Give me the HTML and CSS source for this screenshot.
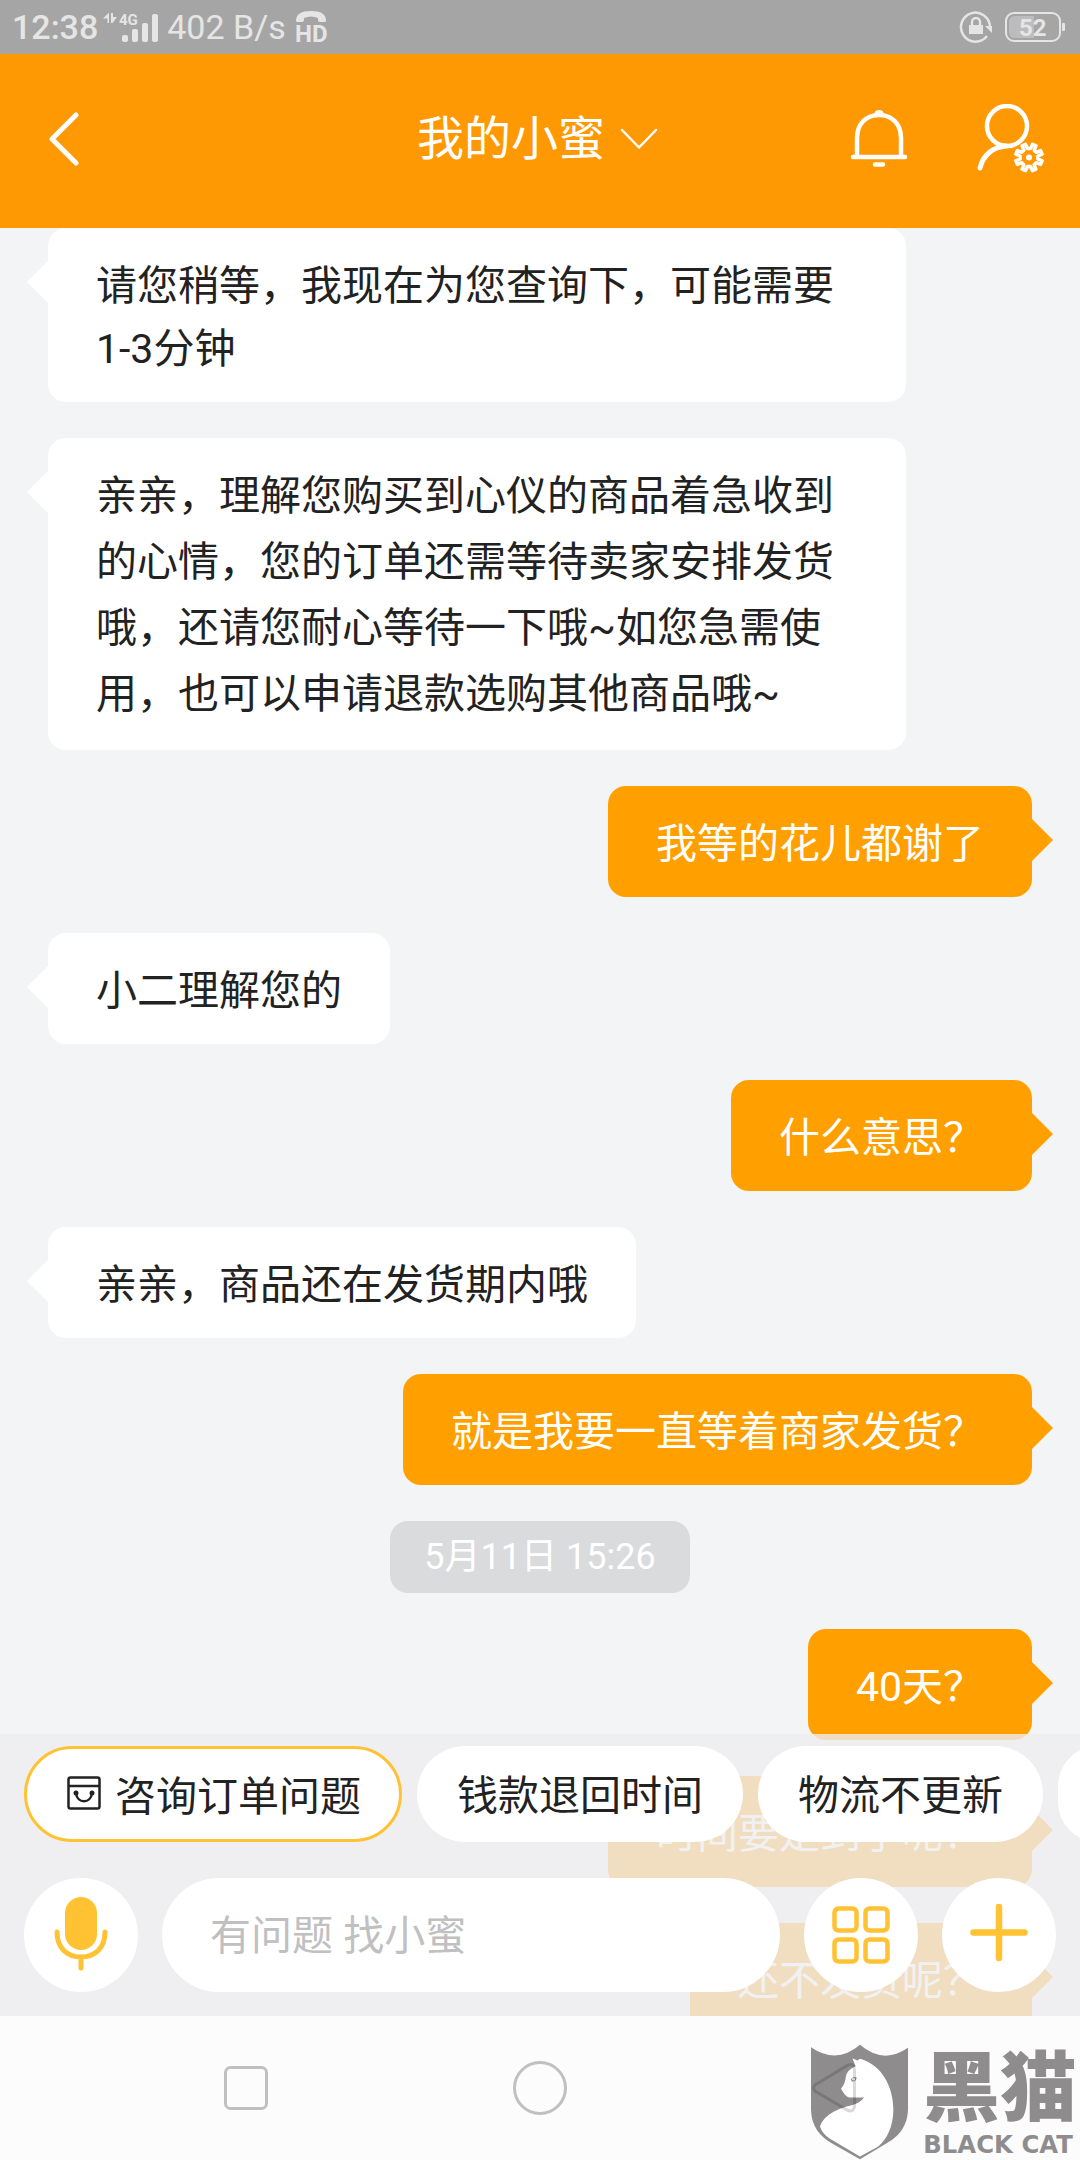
FILE: index.html
```html
<!DOCTYPE html>
<html lang="zh-CN">
<head>
    <meta charset="UTF-8">
    <meta name="viewport" content="width=device-width, initial-scale=1.0">
    <title>我的小蜜</title>
    <link rel="stylesheet" href="styles.css">
</head>
<body>

<div class="status-bar">
    <span class="clock">12:38</span>
    <svg class="signal" width="57" height="32" viewBox="102 10 57 32">
        <path d="M103 17.500L109 11.500V22H107.500V17.500ZM111 12H113V16H117L112.500 22H111Z"/>
        <text x="119" y="24" font-size="15">4G</text>
        <rect x="122" y="34" width="6" height="7" rx="2"/>
        <rect x="132" y="28" width="6" height="13" rx="2"/>
        <rect x="142" y="22" width="6" height="19" rx="2"/>
        <rect x="152" y="13" width="6" height="28" rx="2"/>
    </svg>
    <span class="speed">402 B/s</span>
    <svg class="hd" width="36" height="34" viewBox="293 10 36 34">
        <path d="M295 21C295 14 300 11 310 11S325 14 325 21Q325 22 323 22H319Q317 22 317 20V18Q310 15 303 18V20Q303 22 301 22H297Q295 22 295 21Z"/>
        <text x="294" y="42" font-size="24">HD</text>
    </svg>
    <svg class="lock" width="34" height="34" viewBox="959 10 34 34">
        <path d="M990 27A14.500 14.500 0 1 0 987 36" fill="none" stroke="#e5e5e5" stroke-width="2.500"/>
        <path d="M985 26H992V33Z"/>
        <rect x="969" y="25" width="14" height="9"/>
        <path d="M972 26V22a4 4 0 0 1 8 0V26" fill="none" stroke="#e5e5e5" stroke-width="2.500"/>
    </svg>
    <svg class="battery" width="61" height="32" viewBox="1005 11 61 32">
        <path d="M1034 16H1015Q1009 16 1009 22V32Q1009 38 1015 38H1034Z" fill="#bcbcbc"/>
        <rect x="1006" y="13" width="54" height="28" rx="8" fill="none" stroke="#e5e5e5" stroke-width="2"/>
        <rect x="1062" y="23" width="3" height="8" rx="1"/>
        <text x="1019" y="36" font-size="24">52</text>
    </svg>
</div>

<header class="header">
    <button class="icon-button back" aria-label="返回">
        <svg width="30" height="54" viewBox="0 0 30 54">
            <path d="M27 3L3 27L27 51" fill="none" stroke="#fff" stroke-width="5" stroke-linecap="round" stroke-linejoin="round"/>
        </svg>
    </button>
    <button class="title">
        我的小蜜
        <svg width="44" height="22" viewBox="0 0 44 22">
            <path d="M3 2L20 19.500L37 2" fill="none" stroke="#fff" stroke-width="2.500" stroke-linecap="round" stroke-linejoin="round"/>
        </svg>
    </button>
    <div class="header-actions">
        <button class="icon-button" aria-label="通知">
            <svg width="58" height="60" viewBox="0 0 58 60">
                <g fill="none" stroke="#fff" stroke-width="4.500" stroke-linecap="round">
                    <path d="M7 47V29C7 14 17 6 29 6S51 14 51 29V47"/>
                    <path d="M3 48H55"/>
                    <path d="M25 55.500H33"/>
                </g>
                <ellipse cx="29" cy="4.500" rx="4.500" ry="3.500" fill="#fff"/>
            </svg>
        </button>
        <button class="icon-button" aria-label="个人设置">
            <svg width="70" height="70" viewBox="0 0 70 70">
                <g fill="none" stroke="#fff" stroke-linecap="round">
                    <circle cx="30" cy="22" r="20" stroke-width="4.500"/>
                    <path d="M3 64C6 51 16 43 29 42" stroke-width="5"/>
                    <path transform="translate(52 53.500)" d="M8.900 1.500L13.100 3.400L11.600 6.900L7.300 5.200L5.200 7.300L6.900 11.600L3.400 13.100L1.500 8.900H-1.500L-3.400 13.100L-6.900 11.600L-5.200 7.300L-7.300 5.200L-11.600 6.900L-13.100 3.400L-8.900 1.500V-1.500L-13.100 -3.400L-11.600 -6.900L-7.300 -5.200L-5.200 -7.300L-6.900 -11.600L-3.400 -13.100L-1.500 -8.900H1.500L3.400 -13.100L6.900 -11.600L5.200 -7.300L7.300 -5.200L11.600 -6.900L13.100 -3.400L8.900 -1.500Z" stroke-width="3.500" stroke-linejoin="round"/>
                </g>
                <circle cx="52" cy="53.500" r="3" fill="#fff"/>
            </svg>
        </button>
    </div>
</header>

<main class="chat">
    <div class="messages">
        <div class="bubble">请您稍等，我现在为您查询下，可能需要1-3分钟</div>
        <div class="bubble long">亲亲，理解您购买到心仪的商品着急收到的心情，您的订单还需等待卖家安排发货哦，还请您耐心等待一下哦~如您急需使用，也可以申请退款选购其他商品哦~</div>
        <div class="bubble mine">我等的花儿都谢了</div>
        <div class="bubble">小二理解您的</div>
        <div class="bubble mine">什么意思？</div>
        <div class="bubble">亲亲，商品还在发货期内哦</div>
        <div class="bubble mine">就是我要一直等着商家发货？</div>
        <time class="timestamp">5月11日 15:26</time>
        <div class="bubble mine">40天？</div>
        <div class="bubble mine">时间要是到了呢？</div>
        <div class="bubble mine">还不发货呢？</div>
    </div>

    <div class="composer">
        <div class="chips">
            <button class="chip active">
                <svg width="34" height="34" viewBox="0 0 34 34">
                    <g fill="none" stroke="#222" stroke-width="2.500">
                        <rect x="1.500" y="1.500" width="31" height="31" rx="2"/>
                        <path d="M1.500 10H32.500"/>
                        <path d="M9 17C10 28 24 28 25 17"/>
                    </g>
                    <circle cx="9" cy="17" r="2.500" fill="#222"/>
                    <circle cx="25" cy="17" r="2.500" fill="#222"/>
                </svg>
                咨询订单问题
            </button>
            <button class="chip">钱款退回时间</button>
            <button class="chip">物流不更新</button>
            <button class="chip" aria-label="更多"></button>
        </div>
        <div class="input-row">
            <button class="round-button" aria-label="语音">
                <svg width="54" height="76" viewBox="0 0 54 76">
                    <rect x="11" y="0" width="32" height="53" rx="16" fill="#ffc233"/>
                    <path d="M3 35C3 51 13 60 27 60S51 51 51 35M27 60V71" fill="none" stroke="#ffc233" stroke-width="5" stroke-linecap="round"/>
                </svg>
            </button>
            <input class="message-input" type="text" placeholder="有问题 找小蜜" aria-label="输入消息">
            <button class="round-button" aria-label="功能">
                <svg width="58" height="58" viewBox="0 0 58 58">
                    <g fill="none" stroke="#ffc233" stroke-width="4.500">
                        <rect x="2.500" y="2.500" width="22" height="22" rx="4"/>
                        <rect x="33.500" y="2.500" width="22" height="22" rx="4"/>
                        <rect x="2.500" y="33.500" width="22" height="22" rx="4"/>
                        <rect x="33.500" y="33.500" width="22" height="22" rx="4"/>
                    </g>
                </svg>
            </button>
            <button class="round-button" aria-label="添加">
                <svg width="58" height="62" viewBox="0 0 58 62">
                    <path d="M3.500 28.500H54.500M29 3V54" fill="none" stroke="#ffc233" stroke-width="6.500" stroke-linecap="round"/>
                </svg>
            </button>
        </div>
    </div>
</main>

<nav class="nav-bar">
    <button class="nav-button" aria-label="最近任务">
        <svg width="44" height="44" viewBox="0 0 44 44">
            <rect x="1.500" y="1.500" width="41" height="41" rx="5" fill="none" stroke="#c0c0c0" stroke-width="3"/>
        </svg>
    </button>
    <button class="nav-button" aria-label="主屏幕">
        <svg width="54" height="54" viewBox="0 0 54 54">
            <circle cx="27" cy="27" r="25.500" fill="none" stroke="#c0c0c0" stroke-width="3"/>
        </svg>
    </button>
    <button class="nav-button" aria-label="返回上一页">
        <svg width="46" height="52" viewBox="0 0 46 52">
            <path d="M37 3L4 23Q1 26 4 29L36 48Q43 51 43.500 44V8Q43 1 37 3Z" fill="none" stroke="#000" stroke-opacity="0.150" stroke-width="3"/>
        </svg>
    </button>
    <svg class="watermark" width="270" height="117" viewBox="150 130 810 350">
        <path d="M153 142Q230 195 300 135Q370 195 444 144V330C442 385 410 415 380 430L300 478L215 430C180 410 154 380 153 330Z" fill="#8f8c8d"/>
        <path d="M277 175L292 182L300 177C365 195 400 260 400 330C400 380 380 420 355 440L300 470L220 423C195 408 185 395 180 380C195 340 240 325 280 315Q300 309 312 293H268C255 290 248 275 243 266C252 258 256 245 258 228C262 212 275 205 287 199Z" fill="#fff"/>
        <path d="M272 239Q279 229 290 233Q289 244 277 246Z" fill="#8f8c8d"/>
        <circle cx="281" cy="238" r="4" fill="#fff"/>
        <text class="brand" x="490" y="346" font-size="230">黑猫</text>
        <text class="brand-en" x="490" y="459" font-size="73">BLACK CAT</text>
    </svg>
</nav>

</body>
</html>
```

FILE: styles.css
```css
* {
    box-sizing: border-box;
}
body {
    display: flex;
    flex-direction: column;
    height: 100vh;
    margin: 0;
    background-color: #f3f4f6;
    color: #222;
    font-family: Roboto, "Noto Sans CJK SC", sans-serif;
    font-size: 41px;
    overflow: hidden;
}
button, input {
    padding: 0;
    border: none;
    background: none;
    color: inherit;
    font: inherit;
}
button {
    cursor: pointer;
}
svg {
    display: block;
    flex: none;
}

/* status bar */
.status-bar {
    display: flex;
    align-items: center;
    flex: none;
    height: 54px;
    padding: 0 14px 0 12px;
    background-color: #a5a5a5;
    color: #e5e5e5;
    fill: #e5e5e5;
    line-height: 54px;
}
.status-bar text {
    font-weight: 700;
}
.clock {
    font-size: 34px;
    font-weight: 500;
}
.signal {
    margin: 0 8px 0 4px;
}
.speed {
    font-size: 34px;
}
.hd {
    margin-left: 8px;
}
.lock {
    margin-left: auto;
}
.battery {
    margin-left: 12px;
}

/* header */
.header {
    display: grid;
    grid-template-columns: 1fr auto 1fr;
    align-items: center;
    flex: none;
    height: 174px;
    padding: 0 33px 4px;
    background-color: #ff9903;
    color: #fff;
}
.back {
    justify-self: start;
    padding-left: 16px;
}
.title {
    display: flex;
    align-items: center;
    gap: 14px;
    font-size: 47px;
    line-height: 64px;
}
.header-actions {
    display: flex;
    align-items: center;
    justify-content: flex-end;
    gap: 69px;
}

/* messages */
.chat {
    position: relative;
    flex: 1;
    min-height: 0;
}
.messages {
    display: flex;
    flex-direction: column;
    align-items: flex-start;
    gap: 36px;
    height: 100%;
    padding: 0 48px;
    overflow: hidden;
}
.bubble {
    position: relative;
    flex: none;
    max-width: 858px;
    padding: 27px 48px 21px;
    border-radius: 18px;
    background-color: #fff;
    line-height: 63px;
}
.bubble.long {
    padding: 25px 48px 23px;
    line-height: 66px;
}
.bubble::before {
    content: "";
    position: absolute;
    top: 33px;
    right: 100%;
    border: 21px solid transparent;
    border-left-width: 0;
    border-right-color: #fff;
}
.bubble.mine {
    align-self: flex-end;
    background-color: #ffa000;
    color: #fff;
}
.bubble.mine::before {
    right: auto;
    left: 100%;
    border: 21px solid transparent;
    border-right-width: 0;
    border-left-color: #ffa000;
}
.timestamp {
    align-self: center;
    flex: none;
    padding: 0 34px;
    border-radius: 18px;
    background-color: #dadbdd;
    color: #fff;
    font-size: 36px;
    line-height: 72px;
}

/* composer, floats over the end of the chat */
.composer {
    position: absolute;
    right: 0;
    bottom: 0;
    left: 0;
    display: flex;
    flex-direction: column;
    gap: 36px;
    padding: 12px 24px 24px;
    background-color: rgba(237, 238, 240, 0.8);
    overflow: hidden;
}
.chips {
    display: flex;
    gap: 15px;
}
.chip {
    display: flex;
    align-items: center;
    flex: none;
    gap: 14px;
    height: 96px;
    padding: 0 40px 4px;
    border-radius: 48px;
    background-color: #fff;
    white-space: nowrap;
}
.chip.active {
    padding: 0 38px 2px 40px;
    border: 3px solid #ffc233;
}
.input-row {
    display: flex;
    gap: 24px;
}
.round-button {
    display: flex;
    align-items: center;
    justify-content: center;
    flex: none;
    width: 114px;
    height: 114px;
    border-radius: 50%;
    background-color: #fff;
}
.message-input {
    flex: 1;
    min-width: 0;
    height: 114px;
    padding: 2px 48px 0;
    border-radius: 57px;
    background-color: #fff;
    outline: none;
}
.message-input::placeholder {
    color: #c0c0c0;
    opacity: 1;
}

/* navigation bar */
.nav-bar {
    position: relative;
    display: flex;
    flex: none;
    height: 144px;
    padding: 0 99px;
    background-color: #fcfcfc;
}
.nav-button {
    position: relative;
    z-index: 1;
    display: flex;
    align-items: center;
    justify-content: center;
    flex: 1;
}
.watermark {
    position: absolute;
    right: 0;
    bottom: 0;
    fill: #8f8c8d;
}
.brand {
    font-family: "Noto Sans CJK SC", sans-serif;
    font-weight: 900;
}
.brand-en {
    font-family: "DejaVu Sans", sans-serif;
    font-weight: 700;
}
```
